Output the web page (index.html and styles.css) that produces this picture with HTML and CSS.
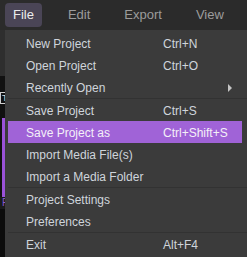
FILE: index.html
```html
<!DOCTYPE html>
<html lang="en">
<head>
  <meta charset="UTF-8">
  <title>Editor - File menu</title>
  <link rel="stylesheet" href="styles.css">
</head>
<body>
  <!-- Top menu bar -->
  <div class="menubar">
    <span class="menubar-item open">File</span>
    <span class="menubar-item">Edit</span>
    <span class="menubar-item">Export</span>
    <span class="menubar-item">View</span>
  </div>

  <!-- App content behind the dropdown -->
  <div class="workspace">
    <div class="sidebar">
      <div class="side-top"></div>
      <div class="side-black">
        <span class="side-box">T</span>
      </div>
      <div class="side-track"></div>
      <div class="side-label">F</div>
      <div class="side-rest"></div>
    </div>
  </div>

  <!-- File dropdown -->
  <div class="dropdown">
    <div class="menu-item"><span>New Project</span><span>Ctrl+N</span></div>
    <div class="menu-item"><span>Open Project</span><span>Ctrl+O</span></div>
    <div class="menu-item"><span>Recently Open</span><span class="arrow"></span></div>
    <div class="menu-sep"></div>
    <div class="menu-item"><span>Save Project</span><span>Ctrl+S</span></div>
    <div class="menu-item active"><span>Save Project as</span><span>Ctrl+Shift+S</span></div>
    <div class="menu-item"><span>Import Media File(s)</span><span></span></div>
    <div class="menu-item"><span>Import a Media Folder</span><span></span></div>
    <div class="menu-sep"></div>
    <div class="menu-item"><span>Project Settings</span><span></span></div>
    <div class="menu-item"><span>Preferences</span><span></span></div>
    <div class="menu-sep"></div>
    <div class="menu-item"><span>Exit</span><span>Alt+F4</span></div>
  </div>
</body>
</html>
```

FILE: styles.css
```css
html,body{height:100%;}
body{
  margin:0; background:#2b2b2b; overflow:hidden;
  font-family:"Liberation Sans",Arial,sans-serif;
  position:relative;
}

.menubar{
  height:30px; display:flex; align-items:center;
  padding-left:5px; gap:18px; background:#2b2b2b;
}
.menubar-item{
  padding:4px 8px 5px; font-size:13px; line-height:15px;
  color:#9c9c9c; border-radius:4px;
}
.menubar-item.open{background:#4a4556;color:#ececec;}

.workspace{display:flex;height:calc(100% - 30px);}
.sidebar{width:5px;display:flex;flex-direction:column;}
.side-top{height:46px;background:#2e2e2e;}
.side-black{height:42px;background:#111;position:relative;}
.side-box{
  display:block;margin-top:16px;height:10px;border:1px solid #ccc;border-right:none;
  font-size:9px;line-height:10px;color:#ddd;padding-left:1px;
}
.side-track{
  height:79px;background:#111;
  border-left:2px solid #111;
  box-shadow:inset 3px 0 0 #9a52d8;
}
.side-label{height:12px;background:#1a1a1a;color:#8c5ad0;font-size:10px;text-indent:2px;}
.side-rest{flex:1;background:#0c0c0c;}

/* dropdown lies over the workspace */
.dropdown{
  position:absolute; top:30px; left:5px; width:234px;
  padding:2px 5px 2px 3px; background:#3b3b3b;
  font-size:12px;
}
.menu-item{
  display:grid; grid-template-columns:137px 1fr;
  height:22px; align-items:center; padding-left:18px; padding-top:1px;
  box-sizing:border-box; color:#cfd5db;
}
.menu-item.active{background:#a063d7;color:#f4f0f8;}
.menu-sep{height:1px;background:#323232;margin-right:-5px;}
.arrow{
  width:0;height:0;margin-left:65px;
  border-left:4px solid #c4c4c4;
  border-top:4px solid transparent;border-bottom:4px solid transparent;
}
```
